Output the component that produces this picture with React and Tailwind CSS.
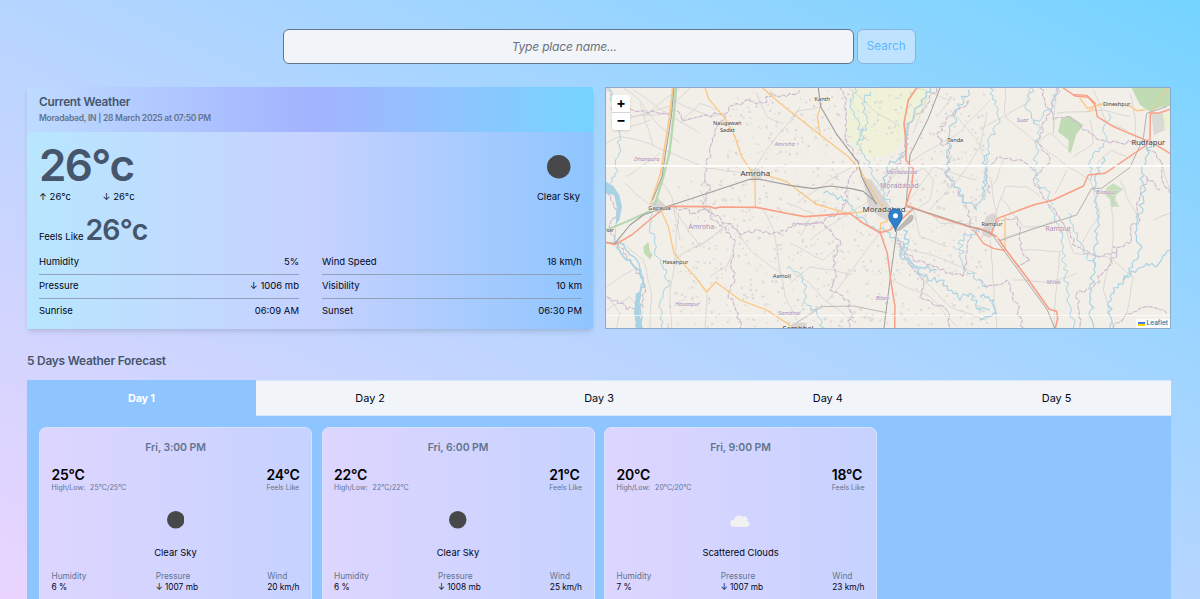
import React from "react";

/* ---------- map helpers ---------- */

function rng(seed) {
  let s = seed;
  return () => {
    s = (s * 16807) % 2147483647;
    return s / 2147483647;
  };
}

// Turns a coarse polyline into a meandering one.
function meander(points, amp, step, seed) {
  const r = rng(seed);
  const n = points.trim().split(/\s+/).map((p) => p.split(",").map(Number));
  let d = `M${n[0][0]},${n[0][1]}`;
  for (let i = 1; i < n.length; i++) {
    const [ax, ay] = n[i - 1];
    const [bx, by] = n[i];
    const len = Math.hypot(bx - ax, by - ay) || 1;
    const k = Math.max(1, Math.round(len / step));
    for (let j = 1; j <= k; j++) {
      const t = j / k;
      const o = j === k ? 0 : (r() - 0.5) * 2 * amp;
      const x = ax + (bx - ax) * t - ((by - ay) / len) * o;
      const y = ay + (by - ay) * t + ((bx - ax) / len) * o;
      d += `L${x.toFixed(1)},${y.toFixed(1)}`;
    }
  }
  return d;
}

const River = ({ p, w = 3, seed = 7, amp = 8 }) => (
  <path d={meander(p, amp, 9, seed)} fill="none" stroke="#a9d3e4" strokeWidth={w} strokeLinejoin="round" />
);
const Border = ({ p, seed = 11, amp = 7 }) => (
  <path d={meander(p, amp, 11, seed)} fill="none" stroke="#cdbacf" strokeWidth="3.4" strokeDasharray="14 3" strokeLinejoin="round" />
);
const Minor = ({ p, seed = 3 }) => (
  <path d={meander(p, 2, 26, seed)} fill="none" stroke="#cfccca" strokeWidth="2" strokeLinejoin="round" />
);
const Line = ({ p, c, w = 4 }) => (
  <polyline points={p} fill="none" stroke={c} strokeWidth={w} strokeLinejoin="round" strokeLinecap="round" />
);
const RED = "#f99f86";
const ORANGE = "#fbc783";
const RAIL = "#9f9d9b";

const dots = (() => {
  const r = rng(4242);
  const out = [];
  for (let i = 0; i < 1900; i++) {
    const x = 200 + r() * 960;
    const y = 30 + r() * 710;
    if (x < 380 && y < 300) continue;
    if (r() > 0.62) continue;
    const s = 2.5 + r() * 5;
    out.push([x, y, s]);
  }
  return out;
})();

const minorLeft = [
  "70,24 120,62 170,130 240,190", "240,24 180,70 130,110", "270,24 205,80 60,120", "20,190 60,170 130,185 320,265",
  "100,30 215,110 300,160", "150,120 60,150", "210,60 330,110 375,100", "240,130 300,70 350,90", "80,290 110,270 180,220",
  "320,265 410,275 465,290", "465,270 500,210 590,95", "215,380 300,500 390,430", "300,330 320,380", "75,310 105,340 150,375",
  "55,480 130,540 155,640 150,744", "20,620 50,600 110,560", "20,690 90,650 130,700", "235,400 225,540 210,640 215,744",
  "235,530 340,470", "490,390 520,450 555,650 590,720", "390,430 460,520 575,600", "560,370 640,400 600,470", "20,650 60,700 50,744",
  "120,70 160,200", "30,60 100,110 200,100", "180,300 215,350 240,480", "330,590 380,560 400,520", "320,640 315,744", "550,130 500,110 470,40",
];
const minorMid = [
  "175,24 250,90 330,140", "380,24 480,60 440,110", "600,60 500,165 350,250", "590,95 570,200 510,290 420,390", "350,250 300,300 260,340",
  "0,490 100,540 160,490", "270,455 180,580 110,665", "180,580 60,560 0,610", "320,480 400,600 480,680 590,720", "110,665 60,610 10,580",
  "110,665 200,730", "320,500 440,530 560,580", "370,390 390,470 470,500", "420,400 450,430 550,430", "345,380 430,260 560,300", "30,80 0,130",
  "480,90 560,180 590,250", "370,280 400,265 430,300 420,360 380,390", "200,250 120,300 20,370", "410,50 370,160", "90,80 20,95", "240,360 130,430 60,480", "300,600 420,650 500,740",
];
const minorRight = [
  "75,24 75,110 250,250 330,300", "75,110 140,70 150,24", "0,150 70,110", "220,110 220,160 230,24", "230,100 370,90 450,110",
  "30,290 50,420", "75,320 40,420", "75,320 140,320 180,350", "60,480 230,420", "130,510 240,515 220,744", "100,600 210,608 290,580",
  "30,480 50,744", "330,300 360,400 300,500", "440,230 395,210 350,250", "420,300 450,370 480,420", "395,340 400,470 395,520 370,630 400,744",
  "170,190 210,160 270,210", "260,270 225,340", "470,200 465,110 450,40", "330,120 340,190 280,230", "520,420 570,400", "540,240 570,330",
  "60,350 130,440 200,440", "0,350 50,300 70,240", "380,530 460,590 440,700", "340,30 380,130 440,150", "250,430 280,520 380,530",
];

const places = [
  [382, 136, "Naugawan", 16, 0], [382, 157, "Sadat", 16, 0], [466, 287, "Amroha", 23, 0], [178, 390, "Gajraula", 16, 0],
  [226, 553, "Hasanpur", 16, 0], [546, 594, "Asmoli", 16, 0], [31, 457, "sar", 14, 0], [594, 752, "Sambhal", 22, 0],
  [667, 62, "Kanth", 16, 0], [1066, 186, "Tanda", 16, 0], [852, 395, "Moradabad", 23, 0], [1176, 438, "Rampur", 16, 0],
  [1550, 77, "Dineshpur", 16, 0], [1645, 194, "Rudrapur", 22, 0],
  [140, 244, "Dhanaura", 17, 1], [554, 197, "Amroha", 17, 1], [304, 447, "Amroha", 20.5, 2], [262, 677, "Hasanpur", 17, 1],
  [568, 705, "Sambhal", 17, 1], [905, 282, "Moradabad", 18, 1], [898, 325, "Moradabad", 21.5, 2], [847, 661, "Bilari", 17, 1],
  [1268, 127, "Suar", 17.5, 1], [1519, 341, "Bilaspur", 17, 1], [1375, 452, "Rampur", 20.5, 2], [1361, 613, "Milak", 17.5, 1],
];

function MapArt() {
  return (
    <svg viewBox="18 24 1692 720" preserveAspectRatio="none" className="block h-full w-full">
      <rect x="0" y="0" width="1720" height="760" fill="#f2efe9" />
      <path d="M760,24 L978,24 L985,60 L960,110 L925,140 L905,190 L870,225 L810,232 L765,205 L735,150 L745,90 Z" fill="#eff2d9" />
      <path d="M1384,115 L1410,108 L1450,135 L1428,165 L1412,220 L1405,214 L1406,180 L1374,155 Z" fill="#bfdcb4" />
      <path d="M1595,24 L1710,24 L1710,78 L1680,82 L1650,95 L1620,75 Z" fill="#bfdcb4" />
      <path d="M1518,325 L1540,310 L1570,328 L1548,345 L1546,360 L1558,380 L1532,380 L1530,358 L1515,345 Z" fill="#c6dfbc" />
      <path d="M130,500 L145,485 L150,515 L158,525 L150,538 L132,520 Z" fill="#bfdcb4" />
      <path d="M1653,100 L1690,100 L1695,150 L1662,165 Z" fill="#d9d9d6" />
      <path d="M1690,100 L1710,98 L1710,155 L1695,150 Z" fill="#eff0d0" />
      <path d="M785,290 L815,300 L850,350 L880,395 L870,425 L840,410 L805,385 L800,345 Z" fill="#d8d5d2" />
      <path d="M1158,410 L1180,398 L1192,415 L1182,450 L1172,475 L1145,465 Z" fill="#d8d5d2" />
      <path d="M150,372 L175,355 L205,385 L175,402 Z" fill="#d8d5d2" />
      <path d="M450,268 L478,265 L485,295 L455,300 Z" fill="#dcd9d6" />
      <path d="M580,728 L620,728 L620,744 L570,744 Z" fill="#d8d5d2" />

      {dots.map(([x, y, s], i) => (
        <rect key={i} x={x} y={y} width={s} height={s} fill="#dcd9d7" />
      ))}

      {minorLeft.map((p, i) => <Minor key={i} p={p} seed={i + 21} />)}
      <g transform="translate(570 0)">{minorMid.map((p, i) => <Minor key={i} p={p} seed={i + 61} />)}</g>
      <g transform="translate(1140 0)">{minorRight.map((p, i) => <Minor key={i} p={p} seed={i + 91} />)}</g>

      {/* district borders */}
      <Border p="20,30 50,70 110,95 180,100 235,95 245,120 300,110 375,102 400,75 450,62 490,70 515,40 560,50 600,30" />
      <Border p="375,105 345,165 330,220 315,290 330,330 310,380 340,420 390,460 405,480 395,540 405,600 385,640 415,700 420,744" seed={13} />
      <Border p="205,385 255,385 270,400 320,385 380,430 425,465 480,452 540,462 580,430 640,430 700,410 740,370 740,320 770,270 760,210 735,170 740,60 720,24" seed={17} />
      <Border p="20,340 50,390 30,450 70,520 100,560 130,600 130,680 80,690 50,660 20,650" seed={19} />
      <g transform="translate(570 0)">
        <Border p="10,440 100,430 150,480 130,540 140,590 120,630 180,670 180,744" seed={23} />
        <Border p="440,24 400,90 350,130 340,230 300,290 290,350" seed={29} />
        <Border p="535,60 500,90 450,140 450,190 480,200 470,290 530,370 540,440 570,460" seed={31} amp={9} />
        <Border p="320,480 370,540 430,560 520,590 540,460" seed={37} />
        <Border p="320,490 400,600 390,650 470,690 480,744" seed={41} />
      </g>
      <g transform="translate(1140 0)">
        <Border p="180,24 220,120 270,110 330,160 390,190 470,185 500,200 540,240 550,310 570,340" seed={43} />
        <Border p="230,24 200,120 170,180 210,235 160,300 200,360 250,430 290,500 360,530 410,520 400,500 450,490 450,440 480,420 470,380 500,290 540,330" seed={47} />
        <Border p="410,520 340,620 290,640 300,744" seed={53} />
        <Border p="130,744 100,640 80,600 20,620 0,600" seed={59} />
        <Border p="30,340 20,260 60,230 110,240 170,270" seed={57} />
        <Border p="400,744 440,700 500,680 560,700" seed={58} />
        <Border p="50,430 110,410 120,500 150,540 110,560" seed={56} />
      </g>

      {/* rivers */}
      <River p="20,24 40,60 35,120 60,170 55,230 45,290 30,310" seed={61} />
      <path d="M18,305 L40,318 L58,345 L66,380 L58,420 L48,435 L46,480 L42,490 L48,420 L50,380 L42,345 L18,340 Z" fill="#a9d3e4" />
      <River p="45,485 80,540 120,570 135,620 110,650 120,700 110,744" w={5} seed={67} />
      <River p="60,490 110,540 130,600 115,660 125,744" w={4} seed={71} amp={5} />
      <path d="M108,640 L124,640 L116,690 L128,744 L110,744 L102,700 Z" fill="#a9d3e4" />
      <River p="150,395 150,440 165,470 165,510 200,570 205,620 180,670 185,744" seed={73} />
      <River p="560,565 590,575 620,620 610,660 650,700 672,744" seed={79} />
      <g transform="translate(570 0)">
        <River p="240,35 215,70 235,130 205,180 230,240 250,290 300,370" seed={83} />
        <River p="195,24 180,80 220,170 200,195" seed={89} />
        <River p="420,24 370,110 345,150 350,210 290,260 280,330" w={4} seed={97} />
        <River p="100,340 170,360 200,400 250,440 300,460 340,500 370,560 400,590 450,600 510,660 540,640 570,690 600,690" w={3.4} seed={101} amp={10} />
        <River p="340,450 355,490 330,520 380,560 440,570" w={4} seed={103} amp={10} />
        <River p="535,30 495,90 470,230 480,300 530,370 560,390 590,300 585,240 600,220" w={3.4} seed={107} amp={10} />
        <River p="560,450 510,480 520,560 590,620" seed={109} amp={10} />
      </g>
      <g transform="translate(1140 0)">
        <River p="30,24 50,80 60,120 25,190 10,350" seed={113} />
        <River p="155,24 140,90 180,140 165,230 170,310 200,330 215,390 240,440 250,520 260,620 280,744" seed={127} amp={9} />
        <River p="235,24 210,90 160,130" seed={131} />
        <River p="385,100 370,190 330,240 330,300" seed={137} />
        <River p="370,230 345,290 350,400 350,480 345,560 330,640 340,744" w={3.6} seed={139} amp={9} />
        <River p="265,400 290,480 345,560" seed={149} />
        <River p="510,190 485,260 490,350 470,440 480,510 430,600 390,650 390,744" w={3.6} seed={151} amp={9} />
        <River p="430,600 500,550 530,560 570,510" w={3.6} seed={157} amp={9} />
        <River p="0,650 40,660 50,700 0,720" w={4} seed={163} amp={9} />
      </g>

      {/* expressway */}
      <Line p="218,24 210,100 192,215 182,280 152,370" c={ORANGE} w={5} />
      <Line p="228,24 222,100 208,220 190,290 165,372" c="#b3d9ae" w={7} />
      <Line p="222,24 214,110 198,210 186,290 158,360" c={RAIL} w={3} />
      <Line p="18,450 80,425 150,393" c="#b3d9ae" w={6} />

      {/* secondary roads */}
      <Line p="316,24 325,55 375,115 405,170 425,230 465,290" c={ORANGE} />
      <Line p="488,24 540,70 658,163 745,230 780,270 840,370 870,400" c={ORANGE} />
      <Line p="465,293 466,382" c={ORANGE} />
      <Line p="490,283 560,305 648,372 740,400 800,395" c={ORANGE} />
      <Line p="185,395 205,440 222,520 285,590 320,636 347,606 420,660 500,690 580,742" c={ORANGE} />
      <Line p="665,70 652,110 660,163" c={ORANGE} />
      <Line p="840,455 842,430 862,424 872,400" c={ORANGE} />
      <Line p="1215,410 1215,510" c={ORANGE} />
      <Line p="1440,55 1462,85 1505,72 1590,78 1610,92 1635,90" c={ORANGE} />
      <Line p="1480,85 1462,96" c={ORANGE} />
      <Line p="1700,24 1680,60 1655,95" c={ORANGE} w={3} />

      {/* railways */}
      <Line p="18,488 45,490 90,435 130,405 200,380 450,298 480,298 570,316 640,326 690,318 755,326 790,334 830,370" c={RAIL} w={3.4} />
      <Line p="655,24 662,80 708,160 775,248 785,290 828,372" c={RAIL} w={3.4} />
      <Line p="1020,24 985,115 930,225 918,380" c={RAIL} w={3} />
      <Line p="890,455 870,600 852,744" c={RAIL} w={3} />
      <Line p="590,728 665,680 760,678 860,698" c="#bdbbb9" w={3} />
      <Line p="1200,482 1290,450 1430,405 1475,325 1505,325 1590,262 1630,175 1640,100 1700,80" c="#b3b1af" w={3} />

      {/* primary roads */}
      <Line p="18,487 45,494 95,465 185,390" c={RED} w={4.5} />
      <Line p="205,379 330,380 345,385 360,381 470,382 570,402 615,410 750,400 790,430 840,458 870,450 940,386" c={RED} w={5} />
      <Line p="950,24 925,60 912,130 918,185 918,240 940,268 935,320 918,375 1000,406 1110,441 1140,446 1165,455 1190,470" c={RED} w={5} />
      <Line p="840,456 862,520 872,600 885,680 884,744" c={RED} w={4.5} />
      <Line p="1125,455 1150,490 1180,505 1213,512" c={RED} />
      <Line p="1172,465 1192,415 1300,375 1360,360 1450,318 1465,285 1515,280 1640,195 1645,180" c={RED} w={4.5} />
      <Line p="1195,476 1218,510 1283,596 1347,687 1370,694 1373,715 1366,744" c={RED} w={5} />
      <Line p="918,380 1000,403 1110,439 1140,448 1175,462 1213,514 1278,602 1342,690 1364,744" c={RAIL} w={2.6} />
      <Line p="1390,24 1425,48 1465,52 1485,75 1492,110 1540,140 1600,165 1660,190 1710,220" c={RED} w={4.5} />
      <Line p="1420,44 1460,46 1486,70" c={RED} />
      <Line p="1650,180 1651,100 1680,98 1710,88" c={RED} w={4.5} />

      {/* tile seams */}
      <rect x="18" y="255" width="1692" height="5" fill="#ffffff" />
      <rect x="18" y="706" width="1692" height="2" fill="#ffffff" />

      <g fontFamily="'Noto Sans', sans-serif" textAnchor="middle" stroke="#f7f5f2" strokeWidth="1.5" paintOrder="stroke">
        {places.map(([x, y, t, s, k], i) => (
          <text key={i} x={x} y={y} fontSize={s + (k ? 0 : 0.8)} fontStyle={k === 1 ? "italic" : "normal"} fill={k ? "#a68bb4" : "#3c3b3b"}>
            {t}
          </text>
        ))}
      </g>

      {/* marker */}
      <path d="M886,452 L930,405 Q948,400 935,425 L898,453 Z" fill="#000" opacity="0.22" />
      <path d="M886.500,455 C884,437 866,426 866,407 A20.5,20.5 0 0 1 907,407 C907,426 889,437 886.500,455 Z" fill="#2f7fca" stroke="#2566a6" strokeWidth="2" />
      <circle cx="886.500" cy="407" r="7.500" fill="#fff" />
    </svg>
  );
}

/* ---------- panels ---------- */

const Stat = ({ label, value, last }) => (
  <div className={`flex h-[24px] items-center justify-between ${last ? "" : "border-b border-slate-400"}`}>
    <span>{label}</span>
    <span>{value}</span>
  </div>
);

const Moon = ({ className }) => (
  <svg viewBox="0 0 24 24" className={className}>
    <circle cx="12" cy="12" r="12" fill="#48484a" />
  </svg>
);

const Cloud = () => (
  <svg viewBox="0 0 62 42" className="mb-[1px] h-[14px] w-[21px]">
    <path d="M10,41 A10,10 0 0 1 11,20 A16,16 0 0 1 38,12 A9,9 0 0 1 51,24 A9,9 0 0 1 53,41 Z" fill="#f2f2f2" />
  </svg>
);

const forecast = [
  { time: "Fri, 3:00 PM", temp: "25°C", feels: "24°C", range: "25°C/25°C", sky: "Clear Sky", humidity: "6 %", pressure: "1007", wind: "20" },
  { time: "Fri, 6:00 PM", temp: "22°C", feels: "21°C", range: "22°C/22°C", sky: "Clear Sky", humidity: "6 %", pressure: "1008", wind: "25" },
  { time: "Fri, 9:00 PM", temp: "20°C", feels: "18°C", range: "20°C/20°C", sky: "Scattered Clouds", humidity: "7 %", pressure: "1007", wind: "23" },
];

function ForecastCard({ f }) {
  return (
    <div className="flex h-[200px] w-[273px] flex-col rounded-[7px] border border-[#d6e2ff] bg-linear-to-r from-violet-200 to-indigo-200 px-[11.500px] pt-[12px]">
      <div className="text-center text-[10.500px] leading-[16px] font-semibold tracking-[-0.1px] text-slate-500">{f.time}</div>
      <div className="mt-[9px] flex justify-between">
        <div>
          <div className="text-[14px] leading-[19px] font-semibold tracking-[-0.2px] text-black">{f.temp}</div>
          <div className="text-[7px] leading-[8px] text-slate-500">
            High/Low: <span className="ml-[3px]">{f.range}</span>
          </div>
        </div>
        <div>
          <div className="text-[14px] leading-[19px] font-semibold tracking-[-0.2px] text-black">{f.feels}</div>
          <div className="text-[7px] leading-[8px] text-slate-500">Feels Like</div>
        </div>
      </div>
      <div className="mt-[19px] flex h-[18px] items-center justify-center">
        {f.sky === "Clear Sky" ? <Moon className="size-[17.500px]" /> : <Cloud />}
      </div>
      <div className="mt-[17px] text-center text-[9.400px] leading-[14px]">{f.sky}</div>
      <div className="mt-[11px] flex justify-between text-[8.300px] leading-[11px]">
        <div><div className="text-slate-500">Humidity</div><div>{f.humidity}</div></div>
        <div><div className="text-slate-500">Pressure</div><div>↓ {f.pressure} mb</div></div>
        <div><div className="text-slate-500">Wind</div><div>{f.wind} km/h</div></div>
      </div>
    </div>
  );
}

export default function App() {
  return (
    <div className="h-[599px] w-full overflow-hidden bg-linear-to-tr from-purple-200 to-sky-300 pt-[29px] pr-[29px] pl-[27px] font-['Inter',sans-serif] text-slate-950">
      <div className="flex gap-[3px] pl-[255.500px]">
        <input
          className="h-[35px] w-[571.500px] rounded-[6px] border border-slate-500 bg-slate-100 pr-[8px] text-center text-[12px] tracking-[-0.18px] italic placeholder:text-gray-500"
          placeholder="Type place name..."
        />
        <button className="h-[35px] w-[58.500px] rounded-[6px] border border-[#86b4de] bg-[#bfe3ff] text-[11.700px] text-[#5cb8fb]">Search</button>
      </div>

      <div className="mt-[23px] flex gap-[12px]">
        <section className="h-[242px] w-[566px] bg-linear-to-r from-sky-200 via-indigo-200 to-blue-300 shadow-md">
          <header className="h-[45px] bg-linear-to-r from-blue-200 via-indigo-300 to-sky-300 px-[12px] pt-[7px]">
            <h2 className="text-[11.800px] leading-[16px] font-semibold tracking-[-0.250px] text-slate-600">Current Weather</h2>
            <p className="mt-[2px] text-[8.500px] leading-[12px] font-semibold tracking-[-0.240px] text-slate-500">Moradabad, IN | 28 March 2025 at 07:50 PM</p>
          </header>
          <div className="px-[12px] text-[9.500px]">
            <div className="flex h-[118px] justify-between">
              <div>
                <div className="pt-[9px] text-[44px] leading-[48px] font-semibold tracking-[-1.700px] text-slate-600">26°c</div>
                <div className="flex h-[16px] items-center gap-[31.500px]">
                  <span>↑ 26°c</span>
                  <span>↓ 26°c</span>
                </div>
                <div className="mt-[4px] flex items-baseline gap-[2px]">
                  <span>Feels Like</span>
                  <span className="text-[28.500px] leading-[42px] font-semibold tracking-[-0.900px] text-slate-600">26°c</span>
                </div>
              </div>
              <div className="flex flex-col items-center pt-[23px]">
                <div className="flex w-[44px] justify-center"><Moon className="size-[23.500px]" /></div>
                <div className="mt-[11px] pr-[1px] leading-[14px]">Clear Sky</div>
              </div>
            </div>
            <div className="grid grid-cols-[260px_260px] gap-x-[23px]">
              <div className="pt-[1px]">
                <Stat label="Humidity" value="5%" />
                <Stat label="Pressure" value="↓ 1006 mb" />
                <Stat label="Sunrise" value="06:09 AM" last />
              </div>
              <div className="pt-[1px]">
                <Stat label="Wind Speed" value="18 km/h" />
                <Stat label="Visibility" value="10 km" />
                <Stat label="Sunset" value="06:30 PM" last />
              </div>
            </div>
          </div>
        </section>

        <section className="relative h-[242px] w-[566px] overflow-hidden border border-[#8fa9cb] bg-[#f2efe9]">
          <MapArt />
          <div className="absolute top-[7px] left-[6px] flex w-[18px] flex-col overflow-hidden rounded-[2px] bg-white text-center text-[14px] font-bold text-black shadow">
            <span className="h-[18px] border-b border-gray-300 leading-[16px]">+</span>
            <span className="h-[17px] leading-[14px]">−</span>
          </div>
          <div className="absolute right-0 bottom-0 flex h-[9px] items-center gap-[2px] bg-white/80 px-[2px] text-[6.500px] leading-[9px] font-medium text-[#0078a8]">
            <span className="flex h-[4px] w-[7px] flex-col">
              <span className="h-[2px] bg-[#4c7be1]" />
              <span className="h-[2px] bg-[#ffd500]" />
            </span>
            Leaflet
          </div>
        </section>
      </div>

      <h2 className="mt-[24px] text-[11.900px] leading-[16px] font-semibold tracking-[-0.220px] text-slate-600">5 Days Weather Forecast</h2>

      <section className="mt-[11px] h-[260px] bg-blue-300">
        <div className="grid h-[36px] grid-cols-5 text-center text-[10.900px] leading-[35px]">
          <div className="pt-[1px] font-bold tracking-[-0.250px] text-white">Day 1</div>
          {[2, 3, 4, 5].map((d) => (
            <div key={d} className="h-[36px] border-y border-[#d5e6fb] bg-slate-100">Day {d}</div>
          ))}
        </div>
        <div className="flex gap-[9.500px] px-[12px] pt-[11px]">
          {forecast.map((f) => <ForecastCard key={f.time} f={f} />)}
        </div>
      </section>
    </div>
  );
}
